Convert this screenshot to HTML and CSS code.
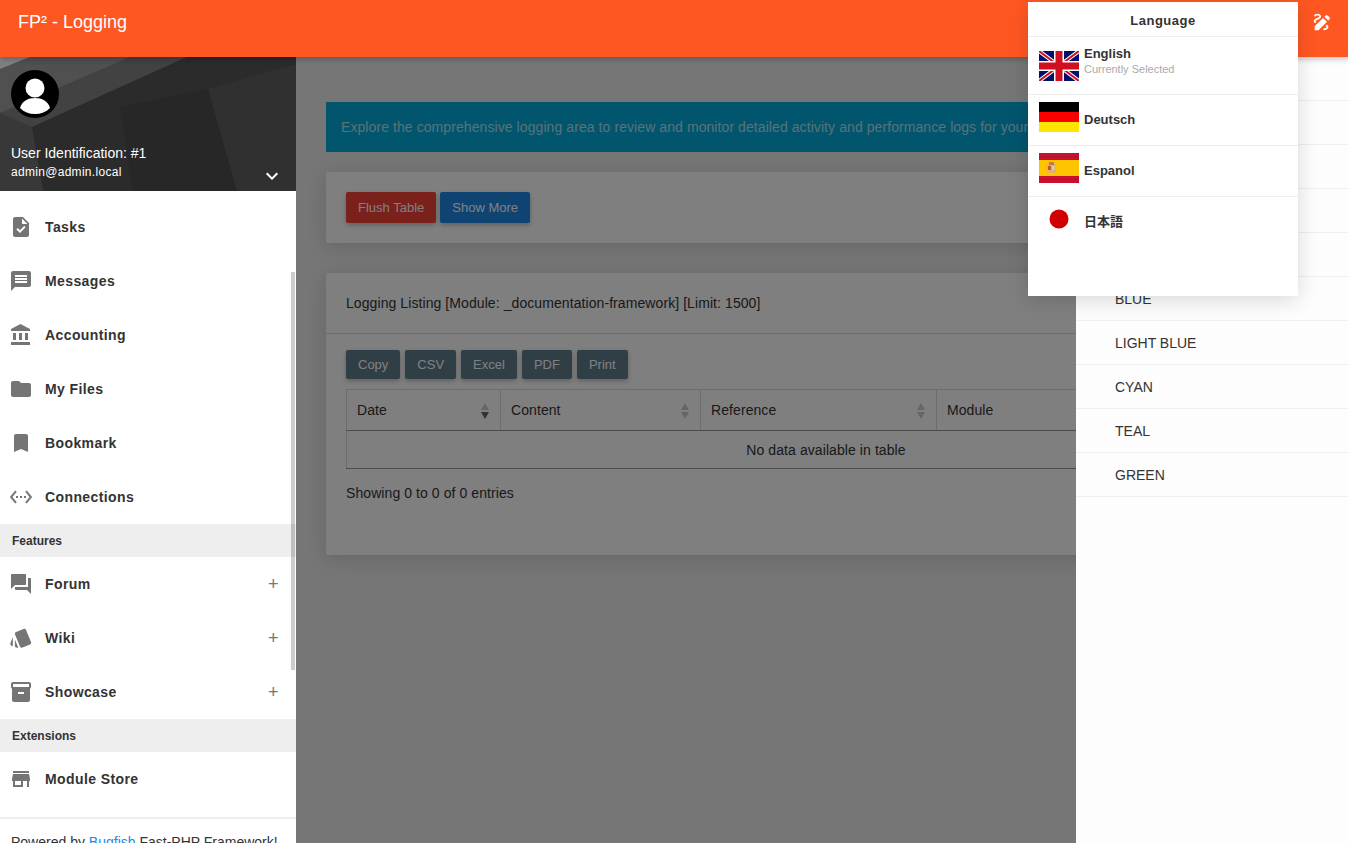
FILE: index.html
```html
<!DOCTYPE html>
<html lang="en">
  <head>
    <meta charset="UTF-8" />
    <meta name="viewport" content="width=device-width, initial-scale=1.0" />
    <title>FP² - Logging</title>
    <link rel="stylesheet" href="styles.css">
  </head>
  <body>
    <header class="topbar">
      <span class="brand">FP² - Logging</span>
      <svg class="topbar-icon" viewBox="0 0 24 24"><path d="M18.85 10.39l1.06-1.06c.78-.78.78-2.05 0-2.83L18.5 5.09c-.78-.78-2.05-.78-2.83 0l-1.06 1.06 4.24 4.24zm-5.66-2.83L4 16.76V21h4.24l9.19-9.19-4.24-4.25zM19 17.5c0 2.19-2.54 3.5-5 3.5-.55 0-1-.45-1-1s.45-1 1-1c1.54 0 3-.73 3-1.5 0-.47-.48-.87-1.23-1.2l1.48-1.48c1.07.63 1.75 1.47 1.75 2.68zM4.58 13.35C3.61 12.79 3 12.06 3 11c0-1.8 1.89-2.63 3.56-3.36C7.59 7.18 9 6.56 9 6c0-.41-.78-1-2-1-1.26 0-1.8.61-1.83.64-.35.41-.98.46-1.4.12-.41-.34-.49-.95-.15-1.38C3.73 4.24 4.76 3 7 3s4 1.32 4 3c0 1.87-1.93 2.72-3.64 3.47C6.42 9.88 5 10.5 5 11c0 .31.43.6 1.07.86l-1.49 1.49z"/></svg>
    </header>

    <div class="layout">
      <aside class="sidebar">
        <div class="user">
          <svg class="user-bg" viewBox="0 0 296 134" preserveAspectRatio="none">
            <rect width="296" height="134" fill="#383838"/>
            <polygon points="0,0 187,0 32,70 0,56" fill="#424242"/>
            <polygon points="0,12 30,0 130,0 0,56" fill="#505050"/>
            <polygon points="0,0 30,0 0,12" fill="#808080"/>
            <polygon points="32,70 187,0 296,0 296,134 43,134" fill="#2b2b2b"/>
            <polygon points="120,50 208,32 237,134 133,134" fill="#272727"/>
            <polygon points="208,32 296,7 296,134 237,134" fill="#303030"/>
          </svg>
          <svg class="avatar" viewBox="0 0 48 48">
            <circle cx="24" cy="24" r="24" fill="#000"/>
            <circle cx="24" cy="18" r="9.5" fill="#fff"/>
            <path d="M9 38c2-7 8-10 15-10s13 3 15 10c-4 4-9 6-15 6S13 42 9 38z" fill="#fff"/>
          </svg>
          <div class="user-id">User Identification: #1</div>
          <div class="user-row">
            <span class="user-mail">admin@admin.local</span>
            <svg class="user-chevron" viewBox="0 0 24 24"><path d="M7.41 8.59L12 13.17l4.59-4.58L18 10l-6 6-6-6z"/></svg>
          </div>
        </div>

        <nav class="nav">
          <a class="nav-item"><svg viewBox="0 0 24 24"><path d="M14 2H6c-1.1 0-1.99.9-1.99 2L4 20c0 1.1.89 2 1.99 2H18c1.1 0 2-.9 2-2V8l-6-6zm-3.06 16L7.4 14.46l1.41-1.41 2.12 2.12 4.24-4.24 1.41 1.41L10.94 18zM13 9V3.5L18.5 9H13z"/></svg>Tasks</a>
          <a class="nav-item"><svg viewBox="0 0 24 24"><path d="M20 2H4c-1.1 0-1.99.9-1.99 2L2 22l4-4h14c1.1 0 2-.9 2-2V4c0-1.1-.9-2-2-2zm-2 12H6v-2h12v2zm0-3H6V9h12v2zm0-3H6V6h12v2z"/></svg>Messages</a>
          <a class="nav-item"><svg viewBox="0 0 24 24"><path d="M4 10v7h3v-7H4zm6 0v7h3v-7h-3zM2 22h19v-3H2v3zm14-12v7h3v-7h-3zm-4.5-9L2 6v2h19V6l-9.5-5z"/></svg>Accounting</a>
          <a class="nav-item"><svg viewBox="0 0 24 24"><path d="M10 4H4c-1.1 0-1.99.9-1.99 2L2 18c0 1.1.9 2 2 2h16c1.1 0 2-.9 2-2V8c0-1.1-.9-2-2-2h-8l-2-2z"/></svg>My Files</a>
          <a class="nav-item"><svg viewBox="0 0 24 24"><path d="M17 3H7c-1.1 0-1.99.9-1.99 2L5 21l7-3 7 3V5c0-1.1-.9-2-2-2z"/></svg>Bookmark</a>
          <a class="nav-item"><svg viewBox="0 0 24 24"><path d="M7.77 6.76L6.23 5.48.82 12l5.41 6.52 1.54-1.28L3.42 12l4.35-5.24zM7 13h2v-2H7v2zm10-2h-2v2h2v-2zm-6 2h2v-2h-2v2zm6.77-7.52l-1.54 1.28L20.58 12l-4.35 5.24 1.54 1.28L23.18 12l-5.41-6.52z"/></svg>Connections</a>
          <div class="nav-section">Features</div>
          <a class="nav-item"><svg viewBox="0 0 24 24"><path d="M21 6h-2v9H6v2c0 .55.45 1 1 1h11l4 4V7c0-.55-.45-1-1-1zm-4 6V3c0-.55-.45-1-1-1H3c-.55 0-1 .45-1 1v14l4-4h10c.55 0 1-.45 1-1z"/></svg>Forum<span class="nav-plus">+</span></a>
          <a class="nav-item"><svg viewBox="0 0 24 24"><path d="M2.53 19.65l1.34.56v-9.03l-2.43 5.86c-.41 1.02.08 2.19 1.09 2.61zm19.5-3.7L17.07 3.98c-.31-.75-1.04-1.21-1.81-1.23-.26 0-.53.04-.79.15L7.1 5.95c-.75.31-1.21 1.03-1.23 1.8-.01.27.04.54.15.8l4.96 11.97c.31.76 1.05 1.22 1.83 1.23.26 0 .52-.05.77-.15l7.36-3.05c1.02-.42 1.51-1.59 1.09-2.6zM5.88 19.75c0 1.1.9 2 2 2h1.45l-3.45-8.34v6.34z"/></svg>Wiki<span class="nav-plus">+</span></a>
          <a class="nav-item"><svg viewBox="0 0 24 24"><path d="M20 2H4c-1 0-2 .9-2 2v3.01c0 .72.43 1.34 1 1.69V20c0 1.1 1.1 2 2 2h14c.9 0 2-.9 2-2V8.7c.57-.35 1-.97 1-1.69V4c0-1.1-1-2-2-2zm-5 12H9v-2h6v2zm5-7H4V4h16v3z"/></svg>Showcase<span class="nav-plus">+</span></a>
          <div class="nav-section">Extensions</div>
          <a class="nav-item"><svg viewBox="0 0 24 24"><path d="M20 4H4v2h16V4zm1 10v-2l-1-5H4l-1 5v2h1v6h10v-6h4v6h2v-6h1zm-9 4H6v-4h6v4z"/></svg>Module Store</a>
        </nav>

        <div class="sidebar-foot">Powered by <a class="foot-link">Bugfish</a> Fast-PHP Framework!</div>
        <div class="sidebar-scroll"></div>
      </aside>

      <main class="content">
        <div class="alert">Explore the comprehensive logging area to review and monitor detailed activity and performance logs for your site.</div>

        <section class="card card-actions">
          <button class="btn btn-red">Flush Table</button>
          <button class="btn btn-blue">Show More</button>
        </section>

        <section class="card">
          <div class="card-head">Logging Listing [Module: _documentation-framework] [Limit: 1500]</div>
          <div class="card-body">
            <div class="tools">
              <button class="btn btn-grey">Copy</button>
              <button class="btn btn-grey">CSV</button>
              <button class="btn btn-grey">Excel</button>
              <button class="btn btn-grey">PDF</button>
              <button class="btn btn-grey">Print</button>
            </div>
            <table class="log-table">
              <thead>
                <tr>
                  <th class="col-date sort sort-desc">Date</th>
                  <th class="col-content sort">Content</th>
                  <th class="col-ref sort">Reference</th>
                  <th>Module</th>
                </tr>
              </thead>
              <tbody>
                <tr><td colspan="4">No data available in table</td></tr>
              </tbody>
            </table>
            <div class="info">Showing 0 to 0 of 0 entries</div>
          </div>
        </section>

        <div class="dim"></div>

        <ul class="theme-panel">
          <li>RED</li>
          <li>PINK</li>
          <li>PURPLE</li>
          <li>DEEP PURPLE</li>
          <li>INDIGO</li>
          <li>BLUE</li>
          <li>LIGHT BLUE</li>
          <li>CYAN</li>
          <li>TEAL</li>
          <li>GREEN</li>
        </ul>
      </main>
    </div>

    <div class="lang-menu">
      <div class="lang-title">Language</div>
      <a class="lang-item lang-first">
        <svg class="flag" viewBox="0 0 40 30">
          <rect width="40" height="30" fill="#00106b"/>
          <path d="M0 0L40 30M40 0L0 30" stroke="#fff" stroke-width="4"/>
          <path d="M0 0L40 30M40 0L0 30" stroke="#cf1020" stroke-width="2"/>
          <path d="M20 0V30M0 15H40" stroke="#fff" stroke-width="10"/>
          <path d="M20 0V30M0 15H40" stroke="#cf1020" stroke-width="7"/>
        </svg>
        <span class="lang-text">
          <span class="lang-name">English</span>
          <span class="lang-note">Currently Selected</span>
        </span>
      </a>
      <a class="lang-item">
        <svg class="flag" viewBox="0 0 40 30">
          <rect width="40" height="10" fill="#000"/>
          <rect y="10" width="40" height="10" fill="#f00"/>
          <rect y="20" width="40" height="10" fill="#ffe600"/>
        </svg>
        <span class="lang-name">Deutsch</span>
      </a>
      <a class="lang-item">
        <svg class="flag" viewBox="0 0 40 30">
          <rect width="40" height="30" fill="#c8102e"/>
          <rect y="7" width="40" height="16" fill="#ffc400"/>
          <rect y="3" width="40" height="1" fill="#b5142a"/>
          <rect y="26" width="40" height="1" fill="#b5142a"/>
          <rect x="8" y="11" width="9" height="9" fill="#e0b070"/>
          <rect x="10" y="9" width="5" height="3" fill="#c9793a"/>
          <rect x="9" y="13" width="3" height="4" fill="#c8553a"/>
          <rect x="13" y="13" width="3" height="4" fill="#d8c8a0"/>
        </svg>
        <span class="lang-name">Espanol</span>
      </a>
      <a class="lang-item">
        <svg class="flag" viewBox="0 0 40 30">
          <rect width="40" height="30" fill="#fff"/>
          <circle cx="20" cy="15" r="9.5" fill="#d00000"/>
        </svg>
        <span class="lang-name lang-cjk">日本語</span>
      </a>
    </div>
  </body>
</html>
```

FILE: styles.css
```css
* {
  box-sizing: border-box;
}

html,
body {
  height: 100%;
}

body {
  margin: 0;
  overflow: hidden;
  font-family: "Liberation Sans", Arial, sans-serif;
  font-size: 14px;
  color: #333;
  background: #ececec;
}

.topbar {
  position: relative;
  z-index: 5;
  height: 57px;
  padding: 0 15px 0 18px;
  display: flex;
  justify-content: space-between;
  align-items: flex-start;
  background: #ff5722;
  box-shadow: 0 2px 6px rgba(0, 0, 0, 0.25);
}

.brand {
  margin-top: 12px;
  font-size: 18px;
  line-height: 21px;
  color: #fff;
}

.topbar-icon {
  width: 22px;
  height: 22px;
  margin-top: 11px;
  fill: #fff;
}

.layout {
  display: flex;
  height: calc(100% - 57px);
}

/* left sidebar */
.sidebar {
  position: relative;
  z-index: 2;
  flex: 0 0 296px;
  background: #fff;
  overflow: hidden;
}

.user {
  position: relative;
  height: 134px;
  padding: 13px 11px 0;
  color: #fff;
}

.user-bg {
  position: absolute;
  top: 0;
  left: 0;
  width: 100%;
  height: 100%;
}

.avatar {
  position: relative;
  display: block;
  width: 48px;
  height: 48px;
}

.user-id {
  position: relative;
  margin-top: 26px;
  line-height: 18px;
}

.user-row {
  position: relative;
  display: flex;
  justify-content: space-between;
  margin-top: 1px;
  font-size: 12px;
  letter-spacing: 0.3px;
  line-height: 18px;
}

.user-chevron {
  width: 24px;
  height: 24px;
  margin: 1px 1px 0 0;
  fill: #fff;
}

.nav {
  padding-top: 9px;
}

.nav-item {
  display: flex;
  align-items: center;
  height: 54px;
  padding: 0 17px 0 9px;
  font-weight: bold;
  letter-spacing: 0.4px;
  color: #333;
}

.nav-item svg {
  width: 24px;
  height: 24px;
  margin-right: 12px;
  fill: #757575;
}

.nav-plus {
  margin-left: auto;
  font-size: 18px;
  font-weight: normal;
  color: #757575;
}

.nav-section {
  height: 33px;
  padding-left: 12px;
  font-size: 12px;
  font-weight: bold;
  line-height: 34px;
  background: #eee;
}

.sidebar-foot {
  margin-top: 11px;
  padding: 15px 11px;
  border-top: 2px solid #eee;
  white-space: nowrap;
}

.foot-link {
  color: #1e88e5;
}

.sidebar-scroll {
  position: absolute;
  top: 215px;
  right: 1px;
  width: 4px;
  height: 398px;
  background: rgba(0, 0, 0, 0.2);
}

/* main area */
.content {
  position: relative;
  flex: 1;
  min-width: 0;
  padding: 45px 22px 0 30px;
  letter-spacing: 0.08px;
}

.alert {
  height: 50px;
  padding: 0 15px;
  line-height: 50px;
  white-space: nowrap;
  color: rgba(255, 255, 255, 0.7);
  background: #03aadb;
}

.card {
  margin-top: 30px;
  background: #fff;
  border-radius: 2px;
  box-shadow: 0 4px 20px rgba(0, 0, 0, 0.14);
}

.card-actions {
  margin-top: 20px;
  height: 71px;
  padding: 20px;
  display: flex;
  gap: 4px;
}

.card-head {
  height: 61px;
  padding: 0 20px;
  line-height: 60px;
  border-bottom: 1px solid #ddd;
}

.card-body {
  height: 221px;
  padding: 16px 20px 0;
}

.btn {
  height: 31px;
  padding: 0 12px;
  border: 0;
  border-radius: 2px;
  font: 13px "Liberation Sans", Arial, sans-serif;
  color: #fff;
  box-shadow: 0 2px 5px rgba(0, 0, 0, 0.26);
}

.btn-red {
  background: #f44336;
}

.btn-blue {
  background: #1e88e5;
}

.btn-grey {
  height: 29px;
  background: #607d8b;
}

.tools {
  display: flex;
  gap: 5px;
}

.log-table {
  width: 100%;
  margin-top: 10px;
  border-collapse: collapse;
  border: 1px solid #ddd;
  table-layout: fixed;
}

.log-table th {
  height: 41px;
  padding: 0 10px;
  text-align: left;
  font-weight: normal;
  border-right: 1px solid #ddd;
  border-bottom: 1px solid #999;
}

.log-table td {
  height: 38px;
  text-align: center;
  border-bottom: 1px solid #999;
}

.col-date {
  width: 154px;
}

.col-content {
  width: 200px;
}

.col-ref {
  width: 236px;
}

.sort {
  position: relative;
}

.sort::before,
.sort::after {
  content: "";
  position: absolute;
  right: 11px;
  border-left: 4px solid transparent;
  border-right: 4px solid transparent;
}

.sort::before {
  top: 13px;
  border-bottom: 7px solid #ccc;
}

.sort::after {
  top: 22px;
  border-top: 7px solid #ccc;
}

.sort-desc::after {
  border-top-color: #666;
}

.info {
  margin-top: 16px;
}

.dim {
  position: absolute;
  top: 0;
  bottom: 0;
  left: 0;
  right: 0;
  background: rgba(0, 0, 0, 0.5);
}

/* right panel */
.theme-panel {
  position: absolute;
  top: 0;
  bottom: 0;
  right: 0;
  width: 272px;
  margin: 0;
  padding: 0;
  list-style: none;
  letter-spacing: 0;
  background: #fdfdfd;
}

.theme-panel li {
  height: 44px;
  padding-left: 39px;
  line-height: 44px;
  border-bottom: 1px solid #eee;
}

/* language dropdown */
.lang-menu {
  position: absolute;
  z-index: 6;
  top: 2px;
  left: 1028px;
  width: 270px;
  height: 294px;
  background: #fff;
  box-shadow: 0 4px 20px rgba(0, 0, 0, 0.15);
}

.lang-title {
  height: 35px;
  font-weight: bold;
  font-size: 13px;
  letter-spacing: 0.5px;
  line-height: 37px;
  text-align: center;
  border-bottom: 1px solid #eee;
}

.lang-item {
  display: flex;
  align-items: flex-start;
  gap: 5px;
  height: 51px;
  padding: 7px 11px 0;
  border-bottom: 1px solid #eee;
  font-size: 13px;
  font-weight: bold;
}

.lang-item:last-child {
  border-bottom: 0;
}

.lang-item > .lang-name {
  margin-top: 10px;
}

.lang-first {
  height: 58px;
}

.lang-first .flag {
  margin-top: 7px;
}

.flag {
  flex: 0 0 40px;
  width: 40px;
  height: 30px;
}

.lang-text {
  display: flex;
  flex-direction: column;
  padding-top: 2px;
}

.lang-name {
  line-height: 16px;
}

.lang-cjk {
  font-family: "Liberation Sans", "Noto Sans CJK JP", sans-serif;
}

.lang-note {
  font-size: 11px;
  font-weight: normal;
  line-height: 15px;
  color: #aaa;
}
```
